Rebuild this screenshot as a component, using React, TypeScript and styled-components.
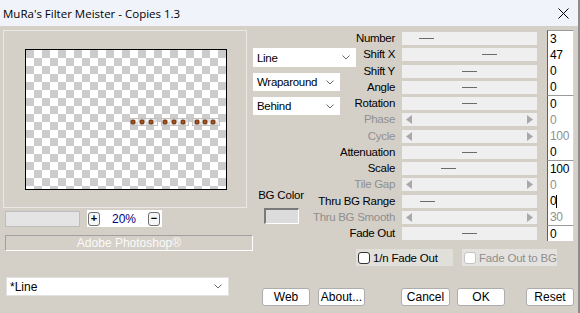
import React from 'react';
import styled, { createGlobalStyle } from 'styled-components';

const GlobalStyle = createGlobalStyle`
  html, body {
    margin: 0;
    padding: 0;
    background: #d4d0c8;
  }
  body {
    width: 580px;
    height: 313px;
    overflow: hidden;
    font-family: "Liberation Sans", Arial, sans-serif;
  }
`;

const ROW_H = 16.25;

const Window = styled.div`
  width: 580px;
  height: 313px;
  box-sizing: border-box;
  display: flex;
  flex-direction: column;
  background: #d4d0c8;
  border-right: 2px solid #8c8c8c;
`;

const TitleBar = styled.div`
  height: 26px;
  flex: none;
  display: flex;
  align-items: center;
  justify-content: space-between;
  padding: 0 9px 0 3px;
  background: #f0f3f9;
  font-family: "Open Sans", "Noto Sans", sans-serif;
  font-size: 11.5px;
  color: #000;
`;

const Main = styled.div`
  height: 244px;
  flex: none;
  display: flex;
`;

const LeftCol = styled.div`
  width: 250px;
  padding-left: 3px;
  display: flex;
  flex-direction: column;
`;

const PreviewFrame = styled.div`
  margin-top: 4px;
  width: 244px;
  height: 178px;
  box-sizing: border-box;
  border: 1px solid #ebe9e5;
  padding: 18px 0 0 21px;
`;

const Preview = styled.div`
  width: 202px;
  height: 141px;
  box-sizing: border-box;
  border: 1px solid #000;
  background: repeating-conic-gradient(#fff 0% 25%, #cccccc 0% 50%) 0 0 / 16px 16px;
  svg {
    display: block;
  }
`;

const ZoomRow = styled.div`
  margin-top: 2px;
  padding-left: 2px;
  display: flex;
  gap: 7px;
  align-items: flex-start;
`;

const GrayField = styled.div`
  margin-top: 1px;
  width: 75px;
  height: 16px;
  box-sizing: border-box;
  background: #e4e4e4;
  border: 1px solid #bdbdbd;
`;

const ZoomBox = styled.div`
  width: 75px;
  height: 17px;
  box-sizing: border-box;
  background: #fff;
  display: flex;
  align-items: center;
  justify-content: space-between;
  padding: 0 2px 0 1px;
`;

const RoundBtn = styled.div`
  width: 12px;
  height: 14px;
  box-sizing: border-box;
  border: 1px solid #6f6f6f;
  border-radius: 3px;
  background: #f7f7f7;
  display: flex;
  align-items: center;
  justify-content: center;
  font-size: 11px;
  font-weight: bold;
  line-height: 1;
  color: #000;
`;

const ZoomText = styled.span`
  color: #000080;
  font-size: 12px;
`;

const AdobeBar = styled.div`
  margin: 8px 0 0 2px;
  width: 248px;
  height: 16px;
  box-sizing: border-box;
  border-top: 1px solid #a0a0a0;
  border-left: 1px solid #a0a0a0;
  border-bottom: 1px solid #fff;
  border-right: 1px solid #fff;
  color: #fafafa;
  font-size: 12px;
  line-height: 14px;
  text-align: center;
`;

const Controls = styled.div`
  flex: 1;
  display: grid;
  grid-template-columns: 104px 45px 135px 37px;
  grid-template-rows: repeat(13, ${ROW_H}px) auto;
  padding-top: 4px;
  align-content: start;
`;

const DropStack = styled.div`
  grid-column: 1;
  grid-row: 2 / 8;
  display: flex;
  flex-direction: column;
  gap: 6px;
  padding-top: 2px;
`;

const DropSelect = styled.div<{ $w: number; $h: number }>`
  width: ${p => p.$w}px;
  height: ${p => p.$h}px;
  box-sizing: border-box;
  background: #fff;
  display: flex;
  align-items: center;
  justify-content: space-between;
  padding: 0 6px 0 4px;
  font-size: 11.5px;
  letter-spacing: -0.3px;
  color: #000;
`;

const BgColorBlock = styled.div`
  grid-column: 1;
  grid-row: 10 / 14;
  width: 48px;
  margin-left: 4px;
  padding-top: 12px;
  display: flex;
  flex-direction: column;
  align-items: center;
  gap: 6px;
  font-size: 11.5px;
  letter-spacing: -0.2px;
  line-height: 14px;
`;

const ColorSwatch = styled.div`
  width: 35px;
  height: 16px;
  box-sizing: border-box;
  background: #dcdcdc;
  border-top: 2px solid #7a7a7a;
  border-left: 2px solid #7a7a7a;
  border-bottom: 1px solid #fff;
  border-right: 1px solid #fff;
`;

const SliderLabel = styled.div<{ $row: number; $off: boolean }>`
  grid-column: 1 / 3;
  grid-row: ${p => p.$row};
  text-align: right;
  padding-right: 7px;
  font-size: 11.5px;
  letter-spacing: -0.3px;
  line-height: ${ROW_H}px;
  white-space: nowrap;
  color: ${p => (p.$off ? '#8f8f8f' : '#000')};
  pointer-events: none;
`;

const Track = styled.div<{ $row: number; $off: boolean }>`
  grid-column: 3;
  grid-row: ${p => p.$row};
  align-self: start;
  margin-top: 2px;
  height: 13px;
  background: #efefef;
  display: flex;
  align-items: center;
  justify-content: ${p => (p.$off ? 'space-between' : 'flex-start')};
  padding: ${p => (p.$off ? '0 4px' : '0')};
`;

const Thumb = styled.div`
  width: 15px;
  height: 1px;
  background: #6b6b6b;
`;

const ValueColumn = styled.div`
  grid-column: 4;
  grid-row: 1 / 14;
  margin-left: 10px;
  display: flex;
  flex-direction: column;
`;

const ValueGroup = styled.div<{ $rows: number }>`
  height: ${p => p.$rows * ROW_H}px;
  box-sizing: border-box;
  border-top: 1px solid #9a9a9a;
  border-left: 1px solid #5e5e5e;
  border-right: 1px solid #d8d8d8;
  background: #fff;
  display: flex;
  flex-direction: column;
`;

const ValueCell = styled.div<{ $off: boolean }>`
  flex: 1;
  display: flex;
  align-items: center;
  padding-left: 2px;
  font-size: 12px;
  letter-spacing: -0.3px;
  color: ${p => (p.$off ? '#8f8f8f' : '#000')};
`;

const Caret = styled.span`
  width: 1px;
  height: 13px;
  background: #000;
`;

const CheckRow = styled.div`
  grid-column: 1 / -1;
  grid-row: 14;
  margin-top: 8px;
  padding-left: 103px;
  display: flex;
  gap: 9px;
`;

const CheckItem = styled.div<{ $w: number; $off: boolean }>`
  width: ${p => p.$w}px;
  height: 17px;
  box-sizing: border-box;
  padding-left: 2px;
  display: flex;
  align-items: center;
  gap: 3px;
  white-space: nowrap;
  overflow: hidden;
  background: ${p => (p.$off ? '#e4e2de' : '#e1dfda')};
  color: ${p => (p.$off ? '#8f8f8f' : '#000')};
  font-size: 11.5px;
  letter-spacing: -0.2px;
`;

const CheckBox = styled.div<{ $off: boolean }>`
  width: 12px;
  height: 12px;
  flex: none;
  box-sizing: border-box;
  border: 1px solid ${p => (p.$off ? '#c4c4c4' : '#333')};
  border-radius: 3px;
  background: #fff;
`;

const Footer = styled.div`
  flex: 1;
  display: flex;
  align-items: flex-start;
  padding: 7px 0 0 6px;
`;

const BottomSelect = styled.div`
  width: 223px;
  height: 19px;
  box-sizing: border-box;
  background: #fff;
  border: 1px solid #e2e2e2;
  display: flex;
  align-items: center;
  justify-content: space-between;
  padding: 0 6px 0 3px;
  font-size: 12px;
`;

const Button = styled.div<{ $w: number; $ml: number }>`
  margin-top: 11px;
  margin-left: ${p => p.$ml}px;
  width: ${p => p.$w}px;
  height: 18px;
  box-sizing: border-box;
  border: 1px solid #adadad;
  border-radius: 3px;
  background: #fff;
  display: flex;
  align-items: center;
  justify-content: center;
  font-size: 12px;
  color: #000;
`;

const Chevron = () => (
  <svg width="8" height="5" viewBox="0 0 8 5">
    <polyline points="0.5,0.5 4,4 7.5,0.5" fill="none" stroke="#6a6a6a" strokeWidth="1" />
  </svg>
);

const ArrowLeft = () => (
  <svg width="6" height="9" viewBox="0 0 6 9">
    <polygon points="6,0 0,4.5 6,9" fill="#a9a9a9" />
  </svg>
);

const ArrowRight = () => (
  <svg width="6" height="9" viewBox="0 0 6 9">
    <polygon points="0,0 6,4.5 0,9" fill="#a9a9a9" />
  </svg>
);

type Slider = { label: string; thumb: number | null; value: string; caret?: boolean };

const sliders: Slider[] = [
  { label: 'Number', thumb: 17, value: '3' },
  { label: 'Shift X', thumb: 80, value: '47' },
  { label: 'Shift Y', thumb: 60, value: '0' },
  { label: 'Angle', thumb: 60, value: '0' },
  { label: 'Rotation', thumb: 60, value: '0' },
  { label: 'Phase', thumb: null, value: '0' },
  { label: 'Cycle', thumb: null, value: '100' },
  { label: 'Attenuation', thumb: 60, value: '0' },
  { label: 'Scale', thumb: 39, value: '100' },
  { label: 'Tile Gap', thumb: null, value: '0' },
  { label: 'Thru BG Range', thumb: 18, value: '0', caret: true },
  { label: 'Thru BG Smooth', thumb: null, value: '30' },
  { label: 'Fade Out', thumb: 60, value: '0' },
];

const groups = [
  [0, 4],
  [4, 8],
  [8, 12],
  [12, 13],
];

const dotGroups = [
  { x: 104, dots: [107, 116, 125] },
  { x: 135, dots: [139, 148, 157] },
  { x: 166, dots: [171, 179, 187] },
];

export default function App() {
  return (
    <>
      <GlobalStyle />
      <Window>
        <TitleBar>
          <span>MuRa's Filter Meister - Copies 1.3</span>
          <svg width="11" height="11" viewBox="0 0 11 11">
            <path d="M0.5 0.5 L10.5 10.5 M10.5 0.5 L0.5 10.5" stroke="#000" strokeWidth="1" />
          </svg>
        </TitleBar>
        <Main>
          <LeftCol>
            <PreviewFrame>
              <Preview>
                <svg width="200" height="139" viewBox="0 0 200 139">
                  {dotGroups.map(g => (
                    <g key={g.x}>
                      <rect x={g.x + 0.5} y={68.5} width={27} height={7} fill="rgba(235,235,235,0.5)" stroke="#c2c2c2" strokeWidth="1" />
                      {g.dots.map(d => (
                        <rect key={d} x={d - 2} y={70} width={4} height={4} rx={1} fill="#a4521f" stroke="#5c2a0c" strokeWidth="0.8" />
                      ))}
                    </g>
                  ))}
                </svg>
              </Preview>
            </PreviewFrame>
            <ZoomRow>
              <GrayField />
              <ZoomBox>
                <RoundBtn>+</RoundBtn>
                <ZoomText>20%</ZoomText>
                <RoundBtn>−</RoundBtn>
              </ZoomBox>
            </ZoomRow>
            <AdobeBar>Adobe Photoshop®</AdobeBar>
          </LeftCol>

          <Controls>
            <DropStack>
              <DropSelect $w={103} $h={19}>
                <span>Line</span>
                <Chevron />
              </DropSelect>
              <DropSelect $w={87} $h={18}>
                <span>Wraparound</span>
                <Chevron />
              </DropSelect>
              <DropSelect $w={87} $h={18}>
                <span>Behind</span>
                <Chevron />
              </DropSelect>
            </DropStack>

            <BgColorBlock>
              <span>BG Color</span>
              <ColorSwatch />
            </BgColorBlock>

            {sliders.map((s, i) => {
              const off = s.thumb === null;
              return (
                <React.Fragment key={s.label}>
                  <SliderLabel $row={i + 1} $off={off}>{s.label}</SliderLabel>
                  <Track $row={i + 1} $off={off}>
                    {off ? (
                      <>
                        <ArrowLeft />
                        <ArrowRight />
                      </>
                    ) : (
                      <Thumb style={{ marginLeft: s.thumb as number }} />
                    )}
                  </Track>
                </React.Fragment>
              );
            })}

            <ValueColumn>
              {groups.map(([a, b]) => (
                <ValueGroup key={a} $rows={b - a}>
                  {sliders.slice(a, b).map(s => (
                    <ValueCell key={s.label} $off={s.thumb === null}>
                      {s.value}
                      {s.caret && <Caret />}
                    </ValueCell>
                  ))}
                </ValueGroup>
              ))}
            </ValueColumn>

            <CheckRow>
              <CheckItem $w={97} $off={false}>
                <CheckBox $off={false} />
                <span>1/n Fade Out</span>
              </CheckItem>
              <CheckItem $w={95} $off={true}>
                <CheckBox $off={true} />
                <span>Fade Out to BG</span>
              </CheckItem>
            </CheckRow>
          </Controls>
        </Main>

        <Footer>
          <BottomSelect>
            <span>*Line</span>
            <Chevron />
          </BottomSelect>
          <Button $w={48} $ml={33}>Web</Button>
          <Button $w={47} $ml={8}>About...</Button>
          <Button $w={49} $ml={36}>Cancel</Button>
          <Button $w={48} $ml={7}>OK</Button>
          <Button $w={48} $ml={21}>Reset</Button>
        </Footer>
      </Window>
    </>
  );
}
